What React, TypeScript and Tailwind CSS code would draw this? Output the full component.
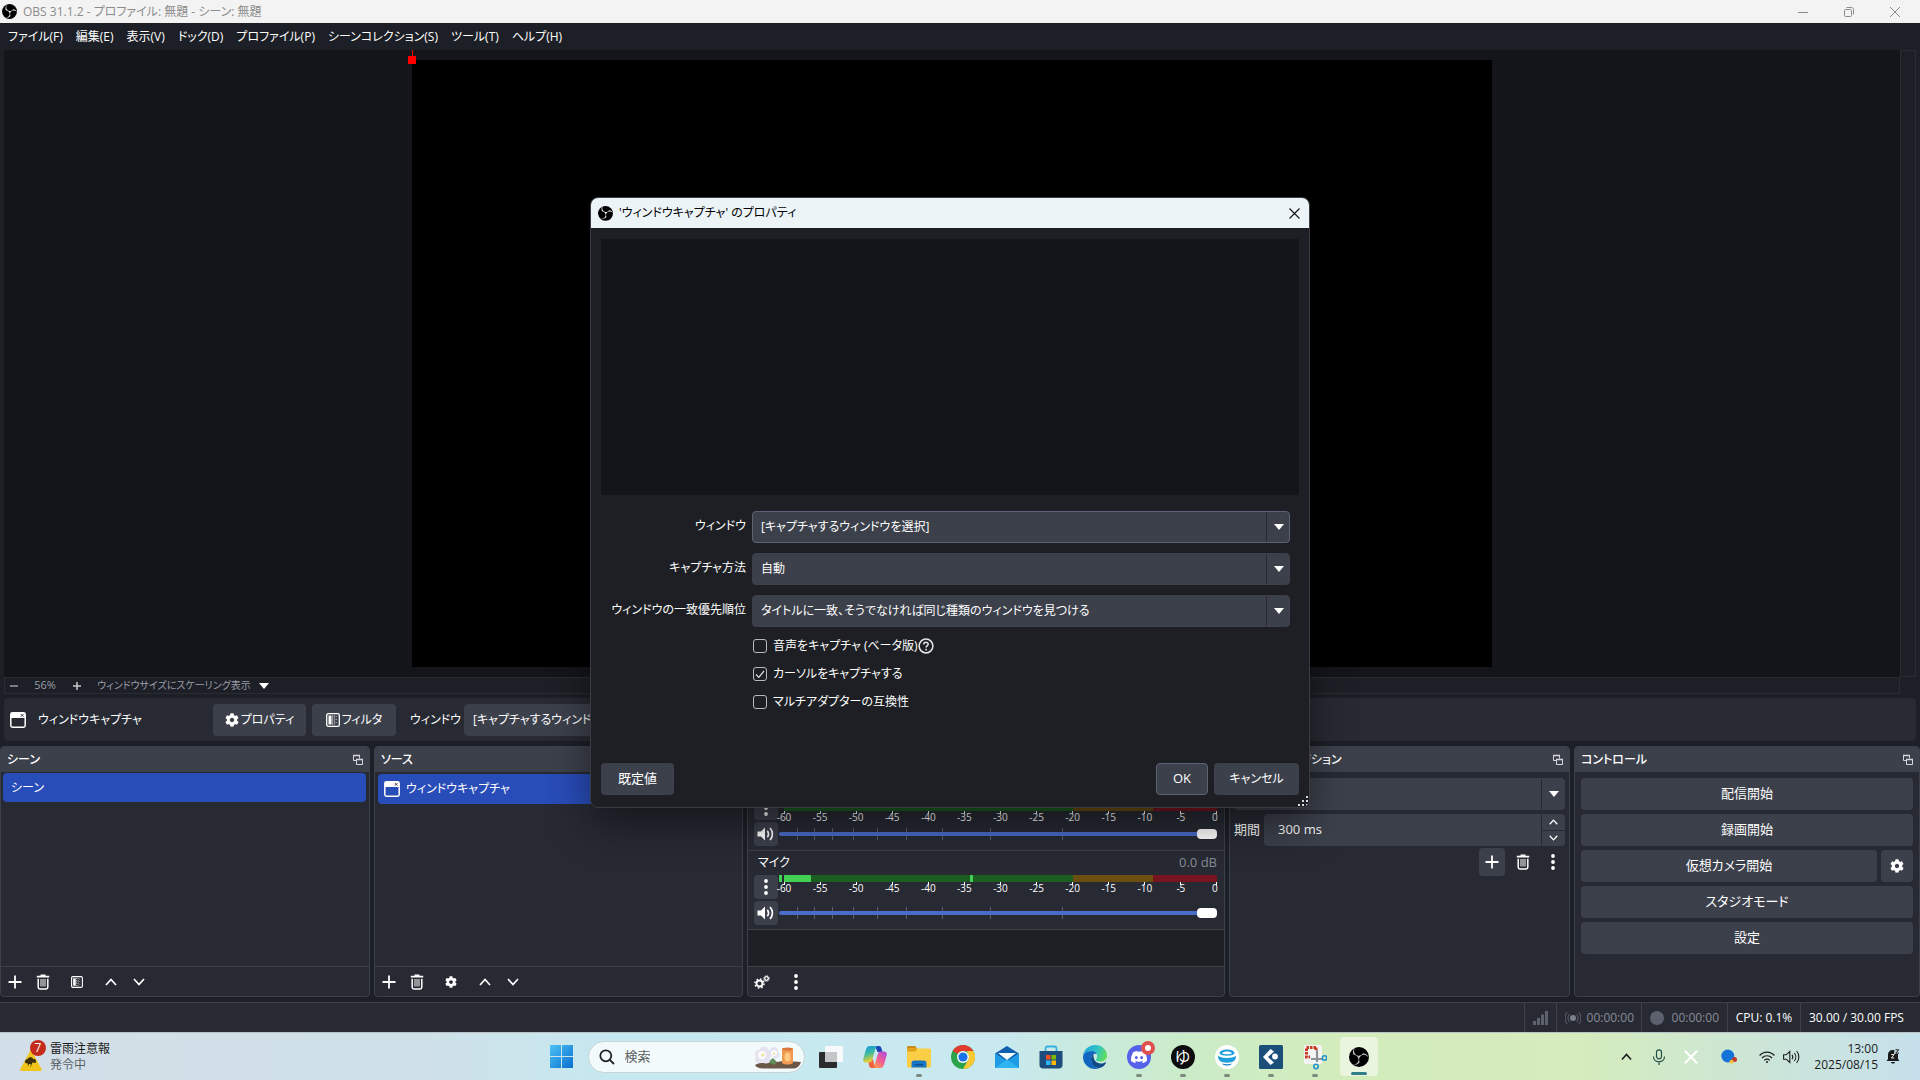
import React from "react";
import { SiObsstudio, SiDiscord } from "react-icons/si";
import { FaCog } from "react-icons/fa";

const menus = ["ファイル(F)", "編集(E)", "表示(V)", "ドック(D)", "プロファイル(P)", "シーンコレクション(S)", "ツール(T)", "ヘルプ(H)"];

type IconProps = { className?: string };

const ObsLogo = ({ className = "size-4", tint = "text-white" }: IconProps & { tint?: string }) => (
  <span className={`flex shrink-0 items-center justify-center overflow-hidden rounded-full bg-black ${className}`}>
    <SiObsstudio className={`size-[118%] shrink-0 ${tint}`} />
  </span>
);

const WindowIcon = () => (
  <svg viewBox="0 0 16 16" className="size-4 shrink-0" fill="none">
    <rect x="0.8" y="0.8" width="14.4" height="14.4" rx="1.6" stroke="#fff" strokeWidth="1.5" />
    <path d="M1 1h14v5H1z" fill="#fff" />
    <path d="M11 2.2l2.4 2.4M13.4 2.2L11 4.6" stroke="#272a33" />
  </svg>
);

const FilterIcon = ({ className = "size-3.5" }: IconProps) => (
  <svg viewBox="0 0 14 14" className={`shrink-0 ${className}`} fill="none">
    <rect x="0.7" y="0.7" width="12.6" height="12.6" rx="1.6" stroke="#fff" strokeWidth="1.3" />
    <path d="M2.5 2.5h3v9h-3z" fill="#fff" />
    <path d="M6.5 2.5v9M8.3 2.5v9" stroke="#fff" strokeDasharray="1 1" />
    <path d="M10.2 3v9" stroke="#fff" strokeDasharray="1 2" strokeWidth="0.8" />
  </svg>
);

const PlusIcon = () => (
  <svg viewBox="0 0 14 14" className="size-3.5" stroke="#fff" strokeWidth="1.8">
    <path d="M7 0.5v13M0.5 7h13" />
  </svg>
);

const TrashIcon = () => (
  <svg viewBox="0 0 14 16" className="h-4 w-3.5" fill="none" stroke="#fff">
    <path d="M0.8 2.6h12.4" strokeWidth="1.8" />
    <path d="M4.5 1.2h5" strokeWidth="1.4" />
    <path d="M2.2 4.8v8.4c0 1 .7 1.7 1.7 1.7h6.2c1 0 1.7-.7 1.7-1.7V4.8" strokeWidth="1.5" />
    <path d="M5 5v7.5M7 5v7.5M9 5v7.5" strokeWidth="1" />
  </svg>
);

const Chevron = ({ up, className = "w-3" }: IconProps & { up?: boolean }) => (
  <svg viewBox="0 0 12 8" className={`${className} ${up ? "" : "rotate-180"}`} fill="none" stroke="currentColor" strokeWidth="1.7">
    <path d="M1 7l5-5.5L11 7" />
  </svg>
);

const Dots = () => (
  <svg viewBox="0 0 4 16" className="h-4 w-1" fill="#fff">
    <circle cx="2" cy="2" r="1.9" />
    <circle cx="2" cy="8" r="1.9" />
    <circle cx="2" cy="14" r="1.9" />
  </svg>
);

const TwoCogsIcon = () => (
  <svg viewBox="0 0 16 14" className="h-3.5 w-4" fill="none" stroke="#fff">
    <circle cx="5.5" cy="8.500" r="3" strokeWidth="1.900" />
    <circle cx="5.500" cy="8.500" r="4.500" strokeWidth="1.600" strokeDasharray="1.600 1.934" />
    <circle cx="12.500" cy="3.500" r="1.800" strokeWidth="1.300" />
    <circle cx="12.500" cy="3.500" r="2.800" strokeWidth="1" strokeDasharray="1.100 1.100" />
  </svg>
);

const SpeakerIcon = () => (
  <svg viewBox="0 0 18 14" className="h-3.5 w-4.5" fill="none" stroke="#fff" strokeWidth="1.7">
    <path d="M0.5 4.5H4L8 0.6v12.8L4 9.5H0.5z" fill="#fff" stroke="none" />
    <path d="M10.3 3.8c1.6 1.7 1.6 4.7 0 6.4M13 1c3.2 3.4 3.2 8.6 0 12" />
  </svg>
);

const PopoutIcon = () => (
  <svg viewBox="0 0 12 12" className="size-3" fill="none" stroke="#d5d7dc">
    <path d="M4 6.500H1.500v-5h6v3" />
    <path d="M1 1.500h7" strokeWidth="1.600" />
    <path d="M4.500 5.500h6v5h-6z" />
    <path d="M4 5.500h7" strokeWidth="1.600" />
  </svg>
);

const Triangle = () => (
  <svg viewBox="0 0 10 6" className="h-1.5 w-2.5" fill="#fff">
    <path d="M0 0h10L5 6z" />
  </svg>
);

function SelectBox({ id, value, focus, label }: { id: string; value: string; focus?: boolean; label?: string }) {
  return (
    <div className="relative min-w-0 flex-1">
      <select
        id={id}
        aria-label={label}
        className={`h-8 w-full appearance-none rounded border bg-[#3c404b] pl-2 text-xs text-white outline-none ${focus ? "border-[#5b6273]" : "border-[#3c404b]"}`}
      >
        <option>{value}</option>
      </select>
      <span className="pointer-events-none absolute inset-y-px right-0 flex w-6 items-center justify-center border-l border-[#272a33]">
        <Triangle />
      </span>
    </div>
  );
}

function Dock({ title, toolbar, children }: { title: string; toolbar?: React.ReactNode; children?: React.ReactNode }) {
  return (
    <section className="flex min-w-0 flex-col overflow-hidden rounded border border-[#3c404b] bg-[#272a33]">
      <header className="flex h-[25px] shrink-0 items-center justify-between bg-[#3c404b] pr-[5px] pl-1.5">
        <h2 className="text-xs font-medium">{title}</h2>
        <button aria-label={`${title}を切り離す`}>
          <PopoutIcon />
        </button>
      </header>
      <div className="flex flex-1 flex-col">{children}</div>
      {toolbar && <div className="flex h-7.5 shrink-0 items-center border-t border-[#3c404b]">{toolbar}</div>}
    </section>
  );
}

const ToolButton = ({ label, children }: { label: string; children: React.ReactNode }) => (
  <button aria-label={label} className="flex w-7 items-center justify-center">
    {children}
  </button>
);

const faderTicks = [18, 35, 53, 74, 98, 127, 163, 211, 283];

function MixerStrip({ name, caption, stereo, level }: { name: string; caption?: boolean; stereo?: boolean; level?: boolean }) {
  const bar = (key: number) => (
    <div key={key} className="flex h-[7px]">
      <span className={`w-[3px] ${level ? "bg-[#41d052]" : ""}`} />
      <span className="relative ml-0.5 flex flex-1">
        <span className="basis-2/3 bg-[#1b5e20]" />
        <span className="basis-[18.5%] bg-[#6b4e10]" />
        <span className="flex-1 bg-[#781420]" />
        {level && <span className="absolute inset-y-0 left-0 w-[27px] bg-[#41d052]" />}
        {level && <span className="absolute inset-y-0 left-[43%] w-[3px] bg-[#41d052]" />}
      </span>
    </div>
  );
  return (
    <div className="flex h-[79px] flex-col border-b border-[#3c404b] pr-[7px] pl-1.5">
      <div className="flex h-6 shrink-0 items-center justify-between pl-1 text-xs">
        {caption && (
          <>
            <span>{name}</span>
            <span className="text-[13px] text-[#878b96]">0.0 dB</span>
          </>
        )}
      </div>
      <div className="flex gap-px">
        <div className="flex w-6 shrink-0 flex-col gap-0.5">
          <button aria-label={`${name}のメニュー`} className="flex h-6 items-center justify-center rounded bg-[#3c404b]">
            <Dots />
          </button>
          <button aria-label={`${name}をミュート`} className="flex h-6 items-center justify-center rounded bg-[#3c404b]">
            <SpeakerIcon />
          </button>
        </div>
        <div className="relative flex min-w-0 flex-1 flex-col">
          <div className="flex flex-col gap-px">{(stereo ? [0, 1] : [0]).map(bar)}</div>
          <div className="ml-[5px] flex h-3 justify-between text-[10px] leading-3">
            {[60, 55, 50, 45, 40, 35, 30, 25, 20, 15, 10, 5, 0].map((n) => (
              <span key={n} className="relative flex w-0 justify-center">
                <i className="absolute top-0 h-[3px] w-px bg-white" />
                <span className={n === 0 ? "pr-1" : ""}>{n ? `-${n}` : "0"}</span>
              </span>
            ))}
          </div>
          <div className="absolute inset-x-0 top-8 h-3">
            {faderTicks.map((x) => (
              <i key={x} className="absolute inset-y-0 w-px bg-[#5b6070]" style={{ left: `${(x / 438) * 100}%` }} />
            ))}
            <input
              type="range"
              defaultValue={100}
              aria-label={`${name}の音量`}
              className="absolute inset-0 h-3 w-full appearance-none bg-transparent [&::-webkit-slider-runnable-track]:h-1 [&::-webkit-slider-runnable-track]:rounded-full [&::-webkit-slider-runnable-track]:bg-[#4a6ccb] [&::-webkit-slider-thumb]:-mt-[3px] [&::-webkit-slider-thumb]:h-2.5 [&::-webkit-slider-thumb]:w-5 [&::-webkit-slider-thumb]:appearance-none [&::-webkit-slider-thumb]:rounded [&::-webkit-slider-thumb]:bg-white"
            />
          </div>
        </div>
      </div>
    </div>
  );
}

const ControlButton = ({ children }: { children: React.ReactNode }) => (
  <button className="h-8 flex-1 rounded bg-[#3c404b] text-[13px]">{children}</button>
);

function FormRow({ id, label, value, focus }: { id: string; label: string; value: string; focus?: boolean }) {
  return (
    <div className="flex items-center gap-1.5">
      <label htmlFor={id} className="w-[145px] pb-0.5 text-right text-xs whitespace-nowrap">
        {label}
      </label>
      <SelectBox id={id} value={value} focus={focus} />
    </div>
  );
}

function Check({ id, label, checked, help }: { id: string; label: string; checked?: boolean; help?: boolean }) {
  return (
    <div className="flex h-7 items-center">
      <span className="relative flex size-3.5">
        <input id={id} type="checkbox" defaultChecked={checked} className="size-3.5 appearance-none rounded-[3px] border border-[#b6b8bd]" />
        {checked && (
          <svg viewBox="0 0 14 14" className="pointer-events-none absolute inset-0" fill="none" stroke="#dfe0e3" strokeWidth="1.2">
            <path d="M3 7.5l2.8 2.8L11 4" />
          </svg>
        )}
      </span>
      <label htmlFor={id} className="pl-1.5 text-xs">
        {label}
      </label>
      {help && (
        <svg viewBox="0 0 16 16" className="size-4" fill="none" stroke="#e6e7ea" strokeWidth="1.5">
          <circle cx="8" cy="8" r="6.9" />
          <path d="M5.8 6.4c0-2.8 4.5-2.7 4.4-.1 0 1.5-2.1 1.7-2.1 3.2M8.1 10.8v1.6" />
        </svg>
      )}
    </div>
  );
}

function PropertiesDialog() {
  return (
    <div role="dialog" aria-label="プロパティ" className="absolute top-[197px] left-[590px] w-[720px] overflow-hidden rounded-lg border border-[#3a3c41] bg-[#1d1f24] shadow-[0_16px_40px_rgba(0,0,0,0.45)]">
      <div className="flex h-[30px] items-center gap-1.5 bg-[#ecf4f8] pr-[7px] pl-[7px] text-black">
        <ObsLogo className="size-[15px]" />
        <h1 className="flex-1 text-xs">'ウィンドウキャプチャ' のプロパティ</h1>
        <button aria-label="閉じる" className="p-0.5">
          <svg viewBox="0 0 11 11" className="size-[11px]" stroke="#111" strokeWidth="1.1">
            <path d="M.5.5l10 10M10.5.5l-10 10" />
          </svg>
        </button>
      </div>
      <div className="px-2.5 pt-[11px] pb-3">
        <div className="h-64 bg-[#14151a]" />
        <div className="flex flex-col gap-2.5 pt-4 pr-[9px]">
          <FormRow id="win" label="ウィンドウ" value="[キャプチャするウィンドウを選択]" focus />
          <FormRow id="method" label="キャプチャ方法" value="自動" />
          <FormRow id="prio" label="ウィンドウの一致優先順位" value="タイトルに一致、そうでなければ同じ種類のウィンドウを見つける" />
        </div>
        <div className="flex flex-col pt-[5px] pl-[152px]">
          <Check id="audio" label="音声をキャプチャ (ベータ版)" help />
          <Check id="cursor" label="カーソルをキャプチャする" checked />
          <Check id="multi" label="マルチアダプターの互換性" />
        </div>
        <div className="mt-[47px] flex gap-1.5 text-[13px]">
          <button className="h-8 w-[73px] rounded bg-[#3c404b]">既定値</button>
          <button className="ml-auto h-8 w-13 rounded border border-[#5b6273] bg-[#3c404b]">OK</button>
          <button className="h-8 w-[85px] rounded bg-[#3c404b] text-xs">キャンセル</button>
        </div>
      </div>
      <svg viewBox="0 0 10 10" className="absolute right-px bottom-px size-2.5" fill="#d8d9dc">
        <path d="M8 0h2v2H8zM4 4h2v2H4zM8 4h2v2H8zM0 8h2v2H0zM4 8h2v2H4zM8 8h2v2H8z" />
      </svg>
    </div>
  );
}

const taskbarApps: { name: string; running?: boolean; icon: React.ReactNode }[] = [
  {
    name: "タスク ビュー",
    icon: (
      <svg viewBox="0 0 24 24" className="size-6">
        <rect x="6" y="1" width="18" height="16" rx="1" fill="#f7f9fa" />
        <rect x="0" y="7" width="18" height="16" rx="1" fill="#2a2c2e" />
        <path d="M6 7h12v10H6z" fill="#c4c6c8" />
      </svg>
    ),
  },
  {
    name: "Copilot",
    icon: (
      <svg viewBox="0 0 24 24" className="size-6">
        <defs>
          <linearGradient id="cpa" x1="0" y1="0" x2="0.3" y2="1">
            <stop offset="0" stopColor="#1596e8" />
            <stop offset=".5" stopColor="#38b9a0" />
            <stop offset="1" stopColor="#f4d02b" />
          </linearGradient>
          <linearGradient id="cpb" x1="1" y1="0" x2="0.2" y2="1">
            <stop offset="0" stopColor="#a54be0" />
            <stop offset=".5" stopColor="#ee5b9c" />
            <stop offset="1" stopColor="#fb9a4a" />
          </linearGradient>
        </defs>
        <path d="M12 1h4c1.500 0 2 1 2.500 2.500L19.500 7h-5z" fill="#1746b8" />
        <path d="M7 1h7.500c-1.500 1-2 2.500-2.500 4.200L9.300 14.500C8.700 16.500 7.800 17.500 6 17.500H3C.5 17.500-.3 16 .5 13L3 4.500C3.700 2 4.800 1 7 1z" fill="url(#cpa)" />
        <path d="M17 23H9.500c1.500-1 2-2.500 2.500-4.200l2.700-9.300c.6-2 1.500-3 3.300-3h3c2.500 0 3.300 1.500 2.500 4.500L21 19.500c-.7 2.500-1.800 3.500-4 3.500z" fill="url(#cpb)" />
        <path d="M12 23H8.500C7 23 6.300 22 6 20.500l-.6-3c2 0 3.200-.8 3.900-3l.4-1z" fill="#f0653f" />
      </svg>
    ),
  },
  {
    name: "エクスプローラー",
    running: true,
    icon: (
      <svg viewBox="0 0 24 24" className="size-6">
        <path d="M0 2.500C0 1.700.7 1 1.500 1H8l2.500 3H0z" fill="#c98a12" />
        <rect x="0" y="3.500" width="24" height="19" rx="1.500" fill="#fbcf45" />
        <path d="M0 6.500h8.500l2-3H2C.8 3.500 0 4.500 0 6.500z" fill="#dfa11c" />
        <path d="M4.500 22.500V18c0-1.500 1-2.500 2.500-2.500h10c1.500 0 2.500 1 2.500 2.500v4.500z" fill="#1875c4" />
        <path d="M8 19h8v1.500H8z" fill="#0e4f92" />
      </svg>
    ),
  },
  {
    name: "Chrome",
    icon: (
      <svg viewBox="0 0 24 24" className="size-6">
        <circle cx="12" cy="12" r="12" fill="#2ba24c" />
        <path d="M12 0c4.400 0 8.300 2.400 10.400 6H12a6 6 0 0 0-5.200 3L1.600 6A12 12 0 0 1 12 0z" fill="#e33b2e" />
        <path d="M22.400 6A12 12 0 0 1 12 24l5.200-9A6 6 0 0 0 17.200 9L16 6z" fill="#fcc934" />
        <circle cx="12" cy="12" r="6" fill="#fff" />
        <circle cx="12" cy="12" r="4.600" fill="#1a73e8" />
      </svg>
    ),
  },
  {
    name: "メール",
    icon: (
      <svg viewBox="0 0 24 24" className="size-6">
        <path d="M0 8.500L12 1l12 7.500-12 9z" fill="#0f5fae" />
        <path d="M0 8.500l12 7.500 12-7.500V23H0z" fill="#1d9be4" />
        <path d="M0 23l12-8.500L24 23z" fill="#2fb4f2" />
        <path d="M3 8h18l-9 7z" fill="#f3fbff" />
      </svg>
    ),
  },
  {
    name: "Microsoft Store",
    icon: (
      <svg viewBox="0 0 24 24" className="size-6">
        <path d="M6.500 7V3.500c0-1.200.8-2 2-2h7c1.200 0 2 .8 2 2V7" fill="none" stroke="#35b1e1" strokeWidth="1.800" />
        <path d="M.5 6h23v14c0 2-1.200 3.500-3.500 3.500H4C1.700 23.500.5 22 .5 20z" fill="#1c4d7c" />
        <path d="M7 10h4.500v4.500H7z" fill="#f25022" />
        <path d="M12.500 10H17v4.500h-4.500z" fill="#7fba00" />
        <path d="M7 15.500h4.500V20H7z" fill="#30b5f4" />
        <path d="M12.500 15.500H17V20h-4.500z" fill="#ffb900" />
      </svg>
    ),
  },
  {
    name: "Edge",
    icon: (
      <svg viewBox="0 0 24 24" className="size-6">
        <defs>
          <linearGradient id="eg" x1="0" y1="0.2" x2="1" y2="0.5">
            <stop offset="0" stopColor="#1fa4e0" />
            <stop offset=".6" stopColor="#33c6c0" />
            <stop offset="1" stopColor="#5fdc5c" />
          </linearGradient>
        </defs>
        <path d="M0 11C.5 5 5.500 0 12 0c7 0 12 5 12 10.500 0 3.500-2.800 6-6.500 6-3 0-4.500-1-4.500-2 0-.8 1.200-1.200 1.200-3.500C14.200 8 11.500 6 8.500 6 4 6 1 8.500 0 11z" fill="url(#eg)" />
        <path d="M0 12C0 9 3.500 6 8.500 6c2.500 0 4.500 1 5.300 2.800C10 8 8 11 8 14c0 5 4 9.500 9 8.800-1.500.8-3.200 1.200-5 1.200A12 12 0 0 1 0 12z" fill="#1366c0" />
        <path d="M8 14c0-2 .8-4 2.500-5-.5 5 2 9.500 7.500 9.500 2.200 0 3.800-1 4.500-1.300.5-.2.700.2.500.6C21.500 21 19 23 16 23c-4.500 0-8-4-8-9z" fill="#114a8b" />
      </svg>
    ),
  },
  {
    name: "Discord",
    running: true,
    icon: (
      <span className="relative flex size-6 items-center justify-center rounded-full bg-[#5561e8]">
        <SiDiscord className="size-4 text-white" />
        <i className="absolute -top-1 -right-1 flex size-3.5 items-center justify-center rounded-full bg-[#e0504f]">
          <i className="size-1.5 rounded-full bg-white" />
        </i>
      </span>
    ),
  },
  {
    name: "ゆ",
    running: true,
    icon: <span className="flex size-6 items-center justify-center rounded-full bg-[#0c0c0c] text-base leading-none text-white">ゆ</span>,
  },
  {
    name: "ブラウザー",
    running: true,
    icon: (
      <svg viewBox="0 0 24 24" className="size-6">
        <circle cx="12" cy="12" r="12" fill="#fff" />
        <path d="M4.500 8.500c0-5.300 15-5.300 15 0-2 3-13 3-15 0z" fill="#1d9fdd" />
        <path d="M7 8.200c1.500-2.200 8.500-2.200 10 0-2 1.300-8 1.300-10 0z" fill="#fff" />
        <path d="M3 11c4 2.600 14 2.600 18 0 .3 3-1.500 5.200-4 6-3 1-7 1-10 0-2.500-.8-4.300-3-4-6z" fill="#1d9fdd" />
        <path d="M7 18.500c3 1 7 1 10 0-1.500 2.800-8.500 2.800-10 0z" fill="#1580c4" />
      </svg>
    ),
  },
  {
    name: "編集ツール",
    running: true,
    icon: (
      <svg viewBox="0 0 24 24" className="size-6">
        <rect width="24" height="24" rx="1.500" fill="#1b4f7a" />
        <path d="M11.500 4L15 6.500 9 12l6 5.500-3.500 2.500L4 12z" fill="#fff" />
        <circle cx="16" cy="11.500" r="2.900" fill="#fff" />
      </svg>
    ),
  },
  {
    name: "切り取り",
    running: true,
    icon: (
      <svg viewBox="0 0 24 26" className="h-6.5 w-6">
        <rect x="1" y="1" width="18" height="19" rx="2" fill="#f4f4f4" />
        <path d="M13 3.500H3.500v9.500H7M13 3.500V7" fill="none" stroke="#c8391d" strokeWidth="3" strokeDasharray="2.500 1" />
        <path d="M14 6v12M8 15h11" stroke="#8d9296" strokeWidth="2.200" />
        <circle cx="21.500" cy="14" r="2.200" fill="none" stroke="#2492d1" strokeWidth="1.600" />
        <circle cx="13" cy="22.500" r="2.200" fill="none" stroke="#2492d1" strokeWidth="1.600" />
      </svg>
    ),
  },
];

function Taskbar() {
  return (
    <footer className="grid h-12 grid-cols-[1fr_auto_1fr] items-center border-t border-[#b9c3c6] bg-[linear-gradient(90deg,#d3dfe8_0%,#cfe0e8_22%,#c6e8f0_32%,#c8e9ef_52%,#cbecc8_62%,#d3ecbb_70%,#d5ecbc_82%,#cce5d8_92%,#c6e0ec_100%)] text-[#1b1b1b]">
      <button className="flex items-center gap-1 pl-4.5 text-left">
        <span className="relative flex">
          <svg viewBox="0 0 28 34" className="h-8.5 w-7">
            <path d="M13 9.500L23.500 29c.5 1-.2 2-1.200 2H3.500C2.400 31 1.800 30 2.300 29z" fill="#f0c419" />
            <path d="M7.500 23c-1.500-2 .3-4 2-3.800.8-2.500 4.700-2.700 5.800-.3 2.200-.2 3.700 2 2.200 4.100l-3-.5-2 5 .3-3.500H11l-1 2.500-.3-3z" fill="#3b3009" />
          </svg>
          <span className="absolute top-0 right-0 flex size-4 items-center justify-center rounded-full bg-[#c42b1c] text-xs text-white">7</span>
        </span>
        <span className="text-xs leading-4">
          雷雨注意報
          <br />
          <span className="text-[#5c6468]">発令中</span>
        </span>
      </button>

      <div className="flex items-center">
        <button aria-label="スタート" className="flex w-11 justify-center">
          <svg viewBox="0 0 23 23" className="size-[23px]">
            <defs>
              <linearGradient id="wn" x1="0" y1="0" x2="1" y2="1">
                <stop offset="0" stopColor="#4cc2f5" />
                <stop offset="1" stopColor="#0a6fcf" />
              </linearGradient>
            </defs>
            <path d="M0 0h11v11H0zM12 0h11v11H12zM0 12h11v11H0zM12 12h11v11H12z" fill="url(#wn)" />
          </svg>
        </button>
        <label className="mx-1 flex h-8 w-[217px] items-center gap-2.5 overflow-hidden rounded-full border border-[#c8d4d8] bg-[#f3fafc] pr-0.5 pl-2.5">
          <svg viewBox="0 0 16 16" className="size-4 shrink-0" fill="none" stroke="#222" strokeWidth="1.800">
            <circle cx="6.800" cy="6.800" r="5.500" />
            <path d="M10.800 10.800L15 15" />
          </svg>
          <input aria-label="検索" placeholder="検索" className="w-0 flex-1 bg-transparent text-[13px] outline-none placeholder:text-[#5d6163]" />
          <svg viewBox="0 0 48 24" className="h-6 w-12 shrink-0">
            <path d="M1 20c6-4 14-1 22-3s18 0 24 0c-1 3-3 6-7 6.500H9C5 23.500 2 22 1 20z" fill="#6c5648" />
            <path d="M14 17l5-4 4 4-3 3z" fill="#5f8c5a" />
            <g fill="#e6e3f0">
              <circle cx="5" cy="9" r="4" />
              <circle cx="10" cy="6" r="4.500" />
              <circle cx="5" cy="14" r="4" />
              <circle cx="12" cy="14" r="4.500" />
              <circle cx="14" cy="9" r="4" />
              <circle cx="20" cy="6" r="4" />
              <circle cx="22" cy="10" r="3.500" />
            </g>
            <g fill="#fbfbff">
              <circle cx="8" cy="10" r="4" />
              <circle cx="20" cy="8" r="3" />
            </g>
            <circle cx="9" cy="10" r="1.600" fill="#f0e29a" />
            <circle cx="20" cy="8.500" r="1.200" fill="#f0e29a" />
            <path d="M28 4c3-1.500 8-1.500 11 0v14c-3 2-8 2-11 0z" fill="#f19a52" />
            <ellipse cx="33.500" cy="12" rx="3" ry="4.500" fill="#ffc983" />
            <ellipse cx="33.500" cy="4" rx="5.500" ry="1.500" fill="#d8773a" />
          </svg>
        </label>
        {taskbarApps.map((app) => (
          <button key={app.name} aria-label={app.name} className="relative flex h-11 w-11 items-center justify-center">
            {app.icon}
            {app.running && <i className="absolute bottom-0.5 h-[3px] w-1.5 rounded-full bg-[#7d8b7f]" />}
          </button>
        ))}
        <button aria-label="OBS Studio" className="relative flex h-10 w-11 items-center justify-center">
          <span className="flex h-[39px] w-[38px] items-center justify-center rounded bg-[#eaf5e0]">
            <ObsLogo className="size-5" tint="text-[#c4c6c8]" />
          </span>
          <i className="absolute bottom-0.5 h-[3px] w-4 rounded-full bg-[#317f86]" />
        </button>
      </div>

      <div className="flex items-center justify-end pr-5">
        <button aria-label="隠れているインジケーター" className="mr-5">
          <Chevron up className="w-[11px]" />
        </button>
        <svg viewBox="0 0 14 16" className="mr-[18px] h-4 w-3.5" fill="none" stroke="#21504a" strokeWidth="1.200">
          <rect x="4.500" y=".8" width="5" height="9" rx="2.500" />
          <path d="M1.500 7.500c0 7 11 7 11 0M7 12.800V16" />
        </svg>
        <svg viewBox="0 0 14 14" className="mr-[23px] size-3.5" stroke="#fff" strokeWidth="2">
          <path d="M.8.8l12.400 12.400M13.200.8L.8 13.200" />
        </svg>
        <svg viewBox="0 0 16 15" className="mr-5.5 h-[15px] w-4">
          <circle cx="6.800" cy="7" r="6.500" fill="#1572d6" />
          <circle cx="13.500" cy="10.500" r="2.500" fill="#c8372b" />
          <circle cx="10.500" cy="12.800" r="2" fill="#f3c23a" />
        </svg>
        <svg viewBox="0 0 16 12" className="mr-2 h-3 w-4" fill="none" stroke="#1b1b1b" strokeWidth="1.200">
          <path d="M.6 4.500c4.200-4.600 10.600-4.600 14.800 0M3 7c2.900-3 7.100-3 10 0M5.300 9.300c1.600-1.700 3.800-1.700 5.400 0" />
          <circle cx="8" cy="11" r="1" fill="#1b1b1b" stroke="none" />
        </svg>
        <svg viewBox="0 0 17 14" className="h-3.5 w-[17px]" fill="none" stroke="#1b1b1b" strokeWidth="1.100">
          <path d="M.6 4.800h2.600L6.800 1.500v11L3.200 9.200H.6zM9 4.800c1 1.300 1 3.100 0 4.400M11.300 3c2 2.300 2 5.700 0 8M13.600 1c3 3.400 3 8.600 0 12" />
        </svg>
        <div className="w-[78px] text-right text-xs leading-4">
          13:00
          <br />
          2025/08/15
        </div>
        <svg viewBox="0 0 14 15" className="ml-2 h-[15px] w-3.5" fill="#1b1b1b">
          <path d="M2 6c0-3 2-5 5-5 1 0 1.500.2 1.500.2L8 5h4v5l1.500 2H.5L2 10zM5 13h4c0 2-4 2-4 0z" />
          <path d="M9.500.8h3.300L9.700 4.200H13" fill="none" stroke="#1b1b1b" />
          <path d="M5.300 5.500h2.800L5.400 9h2.900" fill="none" stroke="#fff" strokeWidth=".9" />
        </svg>
      </div>
    </footer>
  );
}

export default function App() {
  return (
    <div className="relative flex min-h-screen flex-col bg-[#1d1f26] font-['Open_Sans','Noto_Sans_CJK_JP',sans-serif] text-white [font-feature-settings:'palt']">
      <header className="flex h-[23px] items-center bg-[#f3f3f3] pl-0.5 text-[#8b8b8b]">
        <ObsLogo className="size-[15px]" />
        <span className="flex-1 pl-1.5 text-xs">OBS 31.1.2 - プロファイル: 無題 - シーン: 無題</span>
        <div className="flex items-center gap-9 pr-5">
          <button aria-label="最小化">
            <svg viewBox="0 0 10 10" className="size-2.5" stroke="#8b8b8b">
              <path d="M0 5.500h10" />
            </svg>
          </button>
          <button aria-label="元に戻す">
            <svg viewBox="0 0 10 10" className="size-2.5" fill="none" stroke="#8b8b8b">
              <rect x=".5" y="2.500" width="7" height="7" rx="1" />
              <path d="M2.500.5h5c1.200 0 2 .8 2 2v5" />
            </svg>
          </button>
          <button aria-label="閉じる">
            <svg viewBox="0 0 10 10" className="size-2.5" stroke="#8b8b8b">
              <path d="M0 0l10 10M10 0L0 10" />
            </svg>
          </button>
        </div>
      </header>

      <nav className="flex h-[27px] items-center gap-[13px] pl-2 text-xs">
        {menus.map((m) => (
          <button key={m}>{m}</button>
        ))}
      </nav>

      <main className="flex flex-1 flex-col pl-1">
        <div className="flex flex-1 pr-1">
          <div className="flex flex-1 justify-center bg-[#14151a] py-2.5">
            <div className="relative aspect-video h-[607px] bg-black">
              <i className="absolute -top-2.5 left-0 h-2 w-px bg-[#ff0000]" />
              <i className="absolute -top-1 -left-1 size-2 bg-[#ff0000]" />
            </div>
          </div>
          <div className="w-4 border border-[#2a2c33]" />
        </div>
        <div className="mr-5 flex h-[17px] items-center border border-[#2a2c33] text-[10px] text-[#9a9da6]">
          <button aria-label="縮小" className="flex w-[18px] justify-center">
            <svg viewBox="0 0 8 8" className="size-2" stroke="#9a9da6" strokeWidth="1.500">
              <path d="M0 4h8" />
            </svg>
          </button>
          <span className="w-11 text-center text-[11px]">56%</span>
          <button aria-label="拡大" className="flex w-5 justify-center">
            <svg viewBox="0 0 8 8" className="size-2" stroke="#c7c9ce" strokeWidth="1.500">
              <path d="M0 4h8M4 0v8" />
            </svg>
          </button>
          <button className="flex items-center gap-2 pl-2.5">
            ウィンドウサイズにスケーリング表示
            <Triangle />
          </button>
        </div>
        <div className="mt-1 mr-1 flex h-[43px] items-center rounded bg-[#272a33] pl-1.5 text-xs">
          <WindowIcon />
          <span className="w-[187px] pl-3">ウィンドウキャプチャ</span>
          <button className="flex h-8 w-[93px] items-center justify-center gap-0.5 rounded bg-[#3c404b]">
            <FaCog className="size-3.5" />
            プロパティ
          </button>
          <button className="ml-1.5 flex h-8 w-[84px] items-center justify-center gap-0.5 rounded bg-[#3c404b]">
            <FilterIcon />
            フィルタ
          </button>
          <label htmlFor="ctx" className="w-[68px] pl-3.5 whitespace-nowrap">
            ウィンドウ
          </label>
          <div className="flex w-72">
            <SelectBox id="ctx" value="[キャプチャするウィンドウを選択]" />
          </div>
        </div>
      </main>

      <div className="mt-[5px] grid h-[251px] grid-cols-[370fr_369fr_478fr_341fr_346fr] gap-1">
        <Dock
          title="シーン"
          toolbar={
            <>
              <ToolButton label="追加"><PlusIcon /></ToolButton>
              <ToolButton label="削除"><TrashIcon /></ToolButton>
              <span className="flex w-10 justify-center"><ToolButton label="フィルタ"><FilterIcon className="size-3" /></ToolButton></span>
              <ToolButton label="上へ"><Chevron up /></ToolButton>
              <ToolButton label="下へ"><Chevron /></ToolButton>
            </>
          }
        >
          <button className="mt-px mr-[3px] ml-0.5 h-[29px] rounded bg-[#284cb8] pl-2 text-left text-xs">シーン</button>
        </Dock>
        <Dock
          title="ソース"
          toolbar={
            <>
              <ToolButton label="追加"><PlusIcon /></ToolButton>
              <ToolButton label="削除"><TrashIcon /></ToolButton>
              <span className="flex w-10 justify-center"><ToolButton label="プロパティ"><FaCog className="size-3" /></ToolButton></span>
              <ToolButton label="上へ"><Chevron up /></ToolButton>
              <ToolButton label="下へ"><Chevron /></ToolButton>
            </>
          }
        >
          <button className="mx-[3px] mt-0.5 flex h-[30px] items-center gap-1.5 rounded bg-[#284cb8] pl-1.5 text-xs">
            <WindowIcon />
            ウィンドウキャプチャ
          </button>
        </Dock>
        <Dock
          title="音声ミキサー"
          toolbar={
            <>
              <button aria-label="オーディオの詳細設定" className="flex w-7 justify-center"><TwoCogsIcon /></button>
              <button aria-label="メニュー" className="ml-1.5 flex w-7 justify-center"><Dots /></button>
            </>
          }
        >
          <MixerStrip name="デスクトップ音声" stereo />
          <MixerStrip name="マイク" caption level />
          <div className="flex-1 bg-[#1d1f24]" />
        </Dock>
        <Dock title="シーントランジション">
          <div className="flex flex-col gap-1 px-1 pt-1.5">
            <div className="flex"><SelectBox id="tr" label="トランジション" value="フェード" /></div>
            <div className="flex items-center gap-1 text-[13px]">
              <label htmlFor="dur" className="w-[26px] shrink-0">期間</label>
              <div className="flex h-8 min-w-0 flex-1 overflow-hidden rounded bg-[#3c404b]">
                <input id="dur" defaultValue="300 ms" className="w-0 flex-1 bg-transparent pl-3.5 outline-none" />
                <div className="flex w-6 flex-col border-l border-[#272a33]">
                  <button aria-label="増やす" className="flex flex-1 items-center justify-center border-b border-[#272a33]"><Chevron up className="w-[9px]" /></button>
                  <button aria-label="減らす" className="flex flex-1 items-center justify-center"><Chevron className="w-[9px]" /></button>
                </div>
              </div>
            </div>
            <div className="-mt-0.5 flex items-center justify-end gap-1">
              <button aria-label="追加" className="flex h-7 w-[26px] items-center justify-center rounded bg-[#3c404b]"><PlusIcon /></button>
              <ToolButton label="削除"><TrashIcon /></ToolButton>
              <button aria-label="メニュー" className="flex w-6 items-center justify-center"><Dots /></button>
            </div>
          </div>
        </Dock>
        <Dock title="コントロール">
          <div className="flex flex-col gap-1 px-1.5 pt-1.5">
            <div className="flex"><ControlButton>配信開始</ControlButton></div>
            <div className="flex"><ControlButton>録画開始</ControlButton></div>
            <div className="flex gap-1">
              <ControlButton>仮想カメラ開始</ControlButton>
              <button aria-label="仮想カメラの設定" className="flex h-8 w-8 items-center justify-center rounded bg-[#3c404b]"><FaCog className="size-3.5" /></button>
            </div>
            <div className="flex"><ControlButton>スタジオモード</ControlButton></div>
            <div className="flex"><ControlButton>設定</ControlButton></div>
          </div>
        </Dock>
      </div>

      <div className="mt-[5px] flex h-[30px] items-stretch justify-end border-t border-[#3c404b] bg-[#272a33] text-xs">
        <span className="flex w-8 items-center justify-center border-l border-[#3c404b]">
          <svg viewBox="0 0 15 14" className="h-3.5 w-[15px]" fill="#5d616d">
            <path d="M0 10h3v4H0zM4 7h3v7H4zM8 3.500h3V14H8zM12 0h3v14h-3z" />
          </svg>
        </span>
        <span className="flex w-[85px] items-center justify-between border-l border-[#3c404b] pr-[7px] pl-2 text-[#878b96]">
          <svg viewBox="0 0 16 14" className="h-3.5 w-4" fill="none" stroke="#5d616d">
            <circle cx="8" cy="7" r="3" fill="#7d818c" stroke="none" />
            <path d="M4.500 3c-2 2.300-2 5.700 0 8M11.500 3c2 2.300 2 5.700 0 8M2.200 1c-2.700 3.500-2.700 8.500 0 12M13.800 1c2.700 3.500 2.700 8.500 0 12" />
          </svg>
          00:00:00
        </span>
        <span className="flex w-[86px] items-center justify-between border-l border-[#3c404b] px-2 text-[#878b96]">
          <i className="size-3.5 rounded-full bg-[#5d616d]" />
          00:00:00
        </span>
        <span className="flex w-[73px] items-center justify-center border-l border-[#3c404b] whitespace-nowrap">CPU: 0.1%</span>
        <span className="flex w-30 items-center border-l border-[#3c404b] pl-2 whitespace-nowrap">30.00 / 30.00 FPS</span>
      </div>

      <Taskbar />
      <PropertiesDialog />
    </div>
  );
}
